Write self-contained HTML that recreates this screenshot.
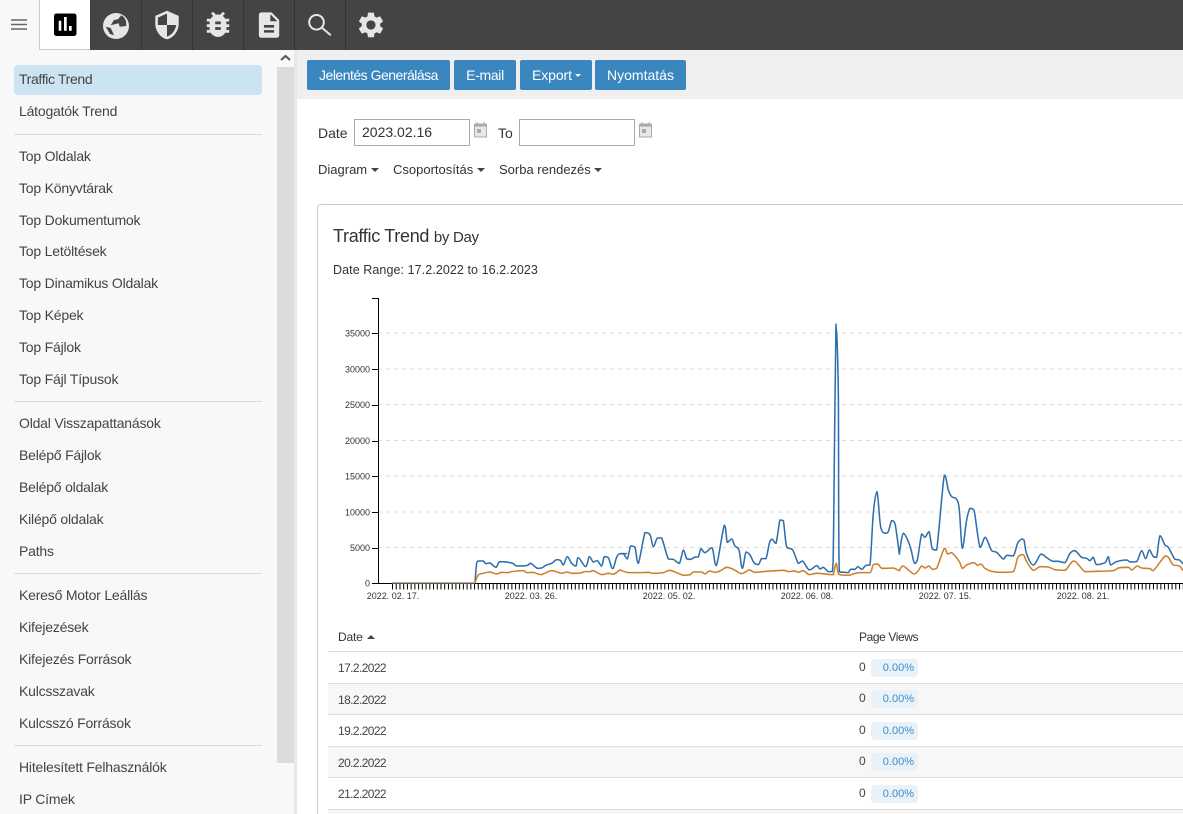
<!DOCTYPE html>
<html><head><meta charset="utf-8"><title>Traffic Trend</title>
<style>
html{margin:0;padding:0;background:#fff;width:1183px;height:814px;overflow:hidden}
body{margin:0;padding:0;background:#fff;width:1183px;height:814px;overflow:hidden;position:relative;font-family:"Liberation Sans",sans-serif;font-size:14px;color:#333}
#w{position:absolute;left:0;top:0;width:1183px;height:814px;overflow:hidden}
.a{position:absolute;white-space:nowrap}
.n{position:absolute;left:19px;color:#444;line-height:20px;white-space:nowrap;letter-spacing:-.2px}
.d{position:absolute;left:14px;width:248px;height:1px;background:#ddd}
.b{position:absolute;top:60px;height:30px;background:#3a86bf;color:#fff;border-radius:2px;line-height:30px;text-align:center}
.i{position:absolute;top:119px;height:25px;border:1px solid #aaa;line-height:25px;box-sizing:content-box}
.r{position:absolute;left:328px;width:855px;height:31px;border-bottom:1px solid #ddd;box-sizing:content-box}
.r.s{background:#f7f7f7}
.r .t{position:absolute;left:10px;top:9px;font-size:12px;color:#444;letter-spacing:-.6px}
.r .z{position:absolute;left:531px;top:8px;font-size:12px;color:#444}
.r .p{position:absolute;left:543px;top:7px;width:47px;height:18px;background:#e8f2f8;border-radius:4px;color:#3a8fc8;font-size:11px;line-height:18px;text-align:right;padding-right:4px;box-sizing:border-box}
.r.s .p{top:6px}
.r.s .z{top:7px}
.c{position:absolute;width:0;height:0;border-left:4px solid transparent;border-right:4px solid transparent;border-top:4px solid #444}
</style></head><body><div id="w">

<div class="a" style="left:0;top:0;width:1183px;height:50px;background:#444"></div>
<div class="a" style="left:0;top:0;width:39px;height:50px;background:#f8f8f8"></div>
<div class="a" style="left:39px;top:0;width:51px;height:50px;background:#fff;border-left:1px solid #ccc;border-bottom:1px solid #ccc;box-sizing:border-box"></div>

<svg class="a" style="left:0;top:0" width="400" height="50" viewBox="0 0 400 50">
<path d="M11 20h16M11 24.5h16M11 29h16" stroke="#666" stroke-width="1.6" fill="none"/>
<rect x="54" y="13.5" width="22.5" height="22.5" rx="2.5" fill="#000"/>
<path d="M58.7 20.7h2.6v10h-2.6zM64 17h2.7v13.7H64zM69 26h2.7v4.7H69z" fill="#fff"/>
<path d="M141.5 0v50M192.5 0v50M243.5 0v50M294.5 0v50M345.5 0v50" stroke="#333" stroke-width="1"/>
<circle cx="116" cy="26" r="13" fill="#e6e6e6"/>
<path d="M121.3 15.3L124 17.2 126 21 126.3 26 119.7 26.7 118.7 23.3 110.7 25.3 114 20 118 19.3z" fill="#444"/>
<path d="M105.7 26.7L110.7 28 114 35.3 110 34z" fill="#444"/>
<g fill="#e6e6e6">
<path transform="translate(151.4 9.4) scale(1.3)" fill-rule="evenodd" d="M12 1L3 5v6c0 5.55 3.84 10.74 9 12 5.16-1.26 9-6.45 9-12V5l-9-4zm0 10.99h7c-.53 4.12-3.28 7.79-7 8.94V12H5V6.3l7-3.11v8.8z"/>
<path transform="translate(201.2 7.5) scale(1.4)" d="M20 8h-2.81c-.45-.78-1.07-1.45-1.82-1.96L17 4.41 15.59 3l-2.17 2.17C12.96 5.06 12.49 5 12 5c-.49 0-.96.06-1.41.17L8.41 3 7 4.41l1.62 1.63C7.88 6.55 7.26 7.22 6.81 8H4v2h2.09c-.05.33-.09.66-.09 1v1H4v2h2v1c0 .34.04.67.09 1H4v2h2.81c1.04 1.79 2.97 3 5.19 3s4.15-1.21 5.19-3H20v-2h-2.09c.05-.33.09-.66.09-1v-1h2v-2h-2v-1c0-.34-.04-.67-.09-1H20V8zm-6 8h-4v-2h4v2zm0-4h-4v-2h4v2z"/>
<path transform="translate(253.8 9.8) scale(1.27)" d="M14 2H6c-1.1 0-1.99.9-1.99 2L4 20c0 1.1.89 2 1.99 2H18c1.1 0 2-.9 2-2V8l-6-6zm2 16H8v-2h8v2zm0-4H8v-2h8v2zm-3-5V3.5L18.5 9H13z"/>
<path transform="translate(355.6 9.6) scale(1.28)" d="M19.14 12.94c.04-.3.06-.61.06-.94 0-.32-.02-.64-.07-.94l2.03-1.58c.18-.14.23-.41.12-.61l-1.92-3.32c-.12-.22-.37-.29-.59-.22l-2.39.96c-.5-.38-1.03-.7-1.62-.94l-.36-2.54c-.04-.24-.24-.41-.48-.41h-3.84c-.24 0-.43.17-.47.41l-.36 2.54c-.59.24-1.13.57-1.62.94l-2.39-.96c-.22-.08-.47 0-.59.22L2.74 8.87c-.12.21-.08.47.12.61l2.03 1.58c-.05.3-.09.63-.09.94s.02.64.07.94l-2.03 1.58c-.18.14-.23.41-.12.61l1.92 3.32c.12.22.37.29.59.22l2.39-.96c.5.38 1.03.7 1.62.94l.36 2.54c.05.24.24.41.48.41h3.84c.24 0 .44-.17.47-.41l.36-2.54c.59-.24 1.13-.56 1.62-.94l2.39.96c.22.08.47 0 .59-.22l1.92-3.32c.12-.22.07-.47-.12-.61l-2.01-1.58zM12 15.6c-1.98 0-3.6-1.62-3.6-3.6s1.62-3.6 3.6-3.6 3.6 1.62 3.6 3.6-1.62 3.6-3.6 3.6z"/>
</g>
<circle cx="316.5" cy="22.3" r="7.3" fill="none" stroke="#e6e6e6" stroke-width="2"/>
<path d="M321.8 27.6L330.8 35.3" stroke="#e6e6e6" stroke-width="2" fill="none"/>
</svg>

<!-- sidebar -->
<div class="a" style="left:0;top:50px;width:294px;height:764px;background:#f8f8f8"></div>
<div class="a" style="left:294px;top:50px;width:3px;height:764px;background:#e8e8e8"></div>
<div class="a" style="left:277px;top:67px;width:17px;height:696px;background:#dcdcdc"></div>
<svg class="a" style="left:277px;top:50px" width="17" height="17"><path d="M4 10l4.5-4 4.5 4" fill="none" stroke="#555" stroke-width="2"/></svg>
<div class="a" style="left:14px;top:65px;width:248px;height:30px;background:#cce4f2;border-radius:4px"></div>
<div class="n" style="top:69px;letter-spacing:-.35px">Traffic Trend</div>
<div class="n" style="top:101px">Látogatók Trend</div>
<div class="d" style="top:134px"></div>
<div class="n" style="top:146px">Top Oldalak</div>
<div class="n" style="top:178px">Top Könyvtárak</div>
<div class="n" style="top:210px">Top Dokumentumok</div>
<div class="n" style="top:241px">Top Letöltések</div>
<div class="n" style="top:273px">Top Dinamikus Oldalak</div>
<div class="n" style="top:305px">Top Képek</div>
<div class="n" style="top:337px">Top Fájlok</div>
<div class="n" style="top:369px">Top Fájl Típusok</div>
<div class="d" style="top:401px"></div>
<div class="n" style="top:413px">Oldal Visszapattanások</div>
<div class="n" style="top:445px">Belépő Fájlok</div>
<div class="n" style="top:477px">Belépő oldalak</div>
<div class="n" style="top:509px">Kilépő oldalak</div>
<div class="n" style="top:541px">Paths</div>
<div class="d" style="top:573px"></div>
<div class="n" style="top:585px">Kereső Motor Leállás</div>
<div class="n" style="top:617px">Kifejezések</div>
<div class="n" style="top:649px">Kifejezés Források</div>
<div class="n" style="top:681px">Kulcsszavak</div>
<div class="n" style="top:713px">Kulcsszó Források</div>
<div class="d" style="top:745px"></div>
<div class="n" style="top:757px">Hitelesített Felhasználók</div>
<div class="n" style="top:789px">IP Címek</div>

<!-- toolbar -->
<div class="a" style="left:297px;top:50px;width:886px;height:49px;background:#efefef"></div>
<div class="b" style="left:307px;width:143px;letter-spacing:-.5px">Jelentés Generálása</div>
<div class="b" style="left:454px;width:62px;letter-spacing:-.3px">E-mail</div>
<div class="b" style="left:520px;width:72px;text-align:left;text-indent:12px;letter-spacing:-.1px">Export</div>
<div class="a" style="left:575px;top:74px;width:0;height:0;border-left:3px solid transparent;border-right:3px solid transparent;border-top:3px solid #fff"></div>
<div class="b" style="left:595px;width:91px">Nyomtatás</div>

<!-- filters -->
<div class="a" style="left:318px;top:125px;color:#333">Date</div>
<div class="i" style="left:354px;width:114px;color:#333;text-indent:7px">2023.02.16</div>
<div class="a" style="left:498px;top:125px;color:#333">To</div>
<div class="i" style="left:519px;width:114px"></div>
<svg class="a" style="left:473px;top:121px" width="16" height="18"><path d="M1.5 3.5h12v12.5h-12z" fill="#e8e8e8" stroke="#aaa"/><path d="M1.5 2.5h12v3h-12z" fill="#aaa"/><path d="M4 1v3M11 1v3" stroke="#aaa"/><rect x="4" y="8" width="4" height="4" fill="#aaa"/></svg>
<svg class="a" style="left:638px;top:121px" width="16" height="18"><path d="M1.5 3.5h12v12.5h-12z" fill="#e8e8e8" stroke="#aaa"/><path d="M1.5 2.5h12v3h-12z" fill="#aaa"/><path d="M4 1v3M11 1v3" stroke="#aaa"/><rect x="4" y="8" width="4" height="4" fill="#aaa"/></svg>
<div class="a" style="left:318px;top:162px;font-size:13px;color:#333">Diagram</div><div class="c" style="left:371px;top:168px"></div>
<div class="a" style="left:393px;top:162px;font-size:13px;color:#333">Csoportosítás</div><div class="c" style="left:477px;top:168px"></div>
<div class="a" style="left:499px;top:162px;font-size:13px;color:#333">Sorba rendezés</div><div class="c" style="left:594px;top:168px"></div>

<!-- card -->
<div class="a" style="left:317px;top:204px;width:900px;height:640px;border:1px solid #ccc;border-radius:4px;box-sizing:border-box"></div>
<div class="a" style="left:333px;top:225px;font-size:18px;line-height:22px;color:#333;letter-spacing:-.3px">Traffic Trend <span style="font-size:15px">by Day</span></div>
<div class="a" style="left:333px;top:263px;font-size:12.5px;color:#333;letter-spacing:.08px">Date Range: 17.2.2022 to 16.2.2023</div>

<!-- chart -->
<svg class="a" style="left:0;top:0" width="1183" height="814" viewBox="0 0 1183 814">
<path d="M378 547.5H1183M378 512H1183M378 476H1183M378 440.5H1183M378 404.5H1183M378 369H1183M378 333H1183" stroke="#ddd" stroke-width="1" stroke-dasharray="4 4" fill="none"/>
<path d="M378.5 298V583.5H1183" stroke="#000" stroke-width="1" fill="none"/>
<path d="M372 298.5h6M372 333.5h6M372 369.5h6M372 405.5h6M372 441.5h6M372 476.5h6M372 512.5h6M372 548.5h6M372 583.5h6" stroke="#000" stroke-width="1"/>
<line x1="392" y1="586.5" x2="1183" y2="586.5" stroke="#000" stroke-width="6" stroke-dasharray="1 2.73"/>
<g font-family="'Liberation Sans',sans-serif" font-size="9" fill="#333" text-anchor="end">
<text x="370" y="336.5">35000</text><text x="370" y="372.5">30000</text><text x="370" y="408">25000</text><text x="370" y="444">20000</text><text x="370" y="479.5">15000</text><text x="370" y="515.5">10000</text><text x="370" y="551">5000</text><text x="370" y="586.5">0</text>
</g>
<g font-family="'Liberation Sans',sans-serif" font-size="9" fill="#333" text-anchor="middle">
<text x="393" y="599">2022. 02. 17.</text><text x="531" y="599">2022. 03. 26.</text><text x="669" y="599">2022. 05. 02.</text><text x="807" y="599">2022. 06. 08.</text><text x="945" y="599">2022. 07. 15.</text><text x="1083" y="599">2022. 08. 21.</text>
</g>
<g fill="none" stroke-linejoin="round" stroke-linecap="round" stroke-width="4.6">
<g stroke="#2e6fab">
<polyline class="sm" transform="translate(320 480) scale(.3333)" points="465,308 470,250 475,243 490,243 497,251 510,249 528,262 540,245 575,249 590,258 620,257 632,250 652,265 665,264 680,255 695,250 710,239 722,242 730,255 742,230 755,250 768,258 775,233 797,260 808,230 820,246 832,242 845,258 853,230 865,233 878,266 890,232 900,221 920,221"/>
<polyline class="sm" transform="translate(620 460) scale(.3333)" points="0,281 10,281 22,297 32,258 45,262 55,310 75,218 90,224 100,260 112,234 125,234 145,297 160,298 178,310 190,270 200,296 212,298 225,291 235,291 243,266 255,278 276,263 289,317 313,196 322,247 335,237 345,258 357,270 367,325 378,276 390,285 402,308 415,314 425,296 438,296 448,250 456,238 468,250 480,180 490,182 500,260 518,270 535,310 548,303 568,330 590,317 600,327 610,322 625,335 637,335 641,200 648,-408 655,-200 658,335 675,337 685,338 692,328 705,328 714,320 725,328 738,316 750,315 760,160 771,95 782,200 795,220 805,215 815,182 825,190 838,282"/>
<polyline class="sm" transform="translate(900 460) scale(.3333)" points="-2,282 10,220 30,258 43,310 52,300 65,222 75,232 87,215 97,267 110,270 133,45 145,90 155,110 170,118 178,150 187,265 200,180 210,145 222,150 240,262 256,232 275,272 290,277 310,297 320,286 340,288 353,250 365,237 372,240 380,282 400,315 423,282 440,293 458,304 475,304 495,308 510,280 525,272 545,292 560,295 570,302 580,292 590,314 615,308 625,290 632,315 650,305 680,300 690,306 710,305 725,272 737,296 748,270 760,290 770,292 780,227 795,255 805,262 825,298 838,300 849,311"/>
</g>
<g stroke="#cf7f2a">
<polyline class="sm" transform="translate(320 480) scale(.3333)" points="465,308 475,285 490,280 510,276 530,282 545,277 565,278 575,275 610,272 620,278 640,277 662,284 695,272 725,280 740,276 755,280 780,279 795,275 810,275 820,272 845,284 865,280 880,283 900,270"/>
<polyline class="sm" transform="translate(620 460) scale(.3333)" points="0,330 25,338 60,338 85,337 100,340 130,338 150,331 190,346 210,344 220,336 245,336 255,342 268,333 285,337 300,333 320,322 340,328 365,341 388,330 405,337 440,334 490,331 505,335 525,333 535,337 550,332 568,344 590,340 637,344 641,340 649,310 657,343 685,346 705,340 720,338 750,338 760,314 773,312 785,325 800,325 820,324 838,332"/>
<polyline class="sm" transform="translate(900 460) scale(.3333)" points="-2,332 10,318 43,342 65,318 75,324 87,318 97,328 110,325 133,265 143,282 155,278 178,305 187,325 200,315 222,308 232,316 243,312 255,325 275,334 310,337 340,335 353,293 365,284 372,286 380,305 400,331 420,320 445,321 465,329 495,331 522,303 555,335 590,334 640,332 655,324 685,322 695,330 712,318 725,324 750,326 760,332 795,288 805,292 820,315 838,318 849,331"/>
</g>
</g>
<path d="M392 582.7H475" stroke="#bdb09c" stroke-width="1.5" fill="none"/>
</svg>

<!-- table -->
<div class="a" style="left:328px;top:651px;width:855px;height:1px;background:#ddd"></div>
<div class="a" style="left:338px;top:630px;font-size:12px;color:#333;letter-spacing:-.2px">Date</div>
<div class="a" style="left:367px;top:635px;width:0;height:0;border-left:4px solid transparent;border-right:4px solid transparent;border-bottom:4px solid #444"></div>
<div class="a" style="left:859px;top:630px;font-size:12px;color:#333;letter-spacing:-.4px">Page Views</div>
<div class="r" style="top:652px;height:31px"><span class="t">17.2.2022</span><span class="z">0</span><span class="p">0.00%</span></div>
<div class="r s" style="top:684px;height:30px"><span class="t">18.2.2022</span><span class="z">0</span><span class="p">0.00%</span></div>
<div class="r" style="top:715px;height:31px"><span class="t">19.2.2022</span><span class="z">0</span><span class="p">0.00%</span></div>
<div class="r s" style="top:747px;height:30px"><span class="t">20.2.2022</span><span class="z">0</span><span class="p">0.00%</span></div>
<div class="r" style="top:778px;height:31px"><span class="t">21.2.2022</span><span class="z">0</span><span class="p">0.00%</span></div>
<div class="a" style="left:328px;top:810px;width:855px;height:4px;background:#f7f7f7"></div>
</div>
<script>
function cl(v,a,b){var lo=Math.min(a,b),hi=Math.max(a,b);return v<lo?lo:v>hi?hi:v}
document.querySelectorAll('polyline.sm').forEach(function(l){
  var n=l.getAttribute('points').trim().split(/\s+/).map(function(s){return s.split(',').map(Number)});
  var d='M'+n[0][0]+' '+n[0][1];
  for(var i=0;i<n.length-1;i++){
    var p0=n[Math.max(i-1,0)],p1=n[i],p2=n[i+1],p3=n[Math.min(i+2,n.length-1)];
    var cy1=cl(p1[1]+(p2[1]-p0[1])/6,p1[1],p2[1]),cy2=cl(p2[1]-(p3[1]-p1[1])/6,p1[1],p2[1]);
    d+='C'+(p1[0]+(p2[0]-p0[0])/6)+' '+cy1+' '+(p2[0]-(p3[0]-p1[0])/6)+' '+cy2+' '+p2[0]+' '+p2[1];
  }
  var e=document.createElementNS('http://www.w3.org/2000/svg','path');
  e.setAttribute('d',d);e.setAttribute('transform',l.getAttribute('transform'));
  l.parentNode.replaceChild(e,l);
});
</script>
</body></html>
